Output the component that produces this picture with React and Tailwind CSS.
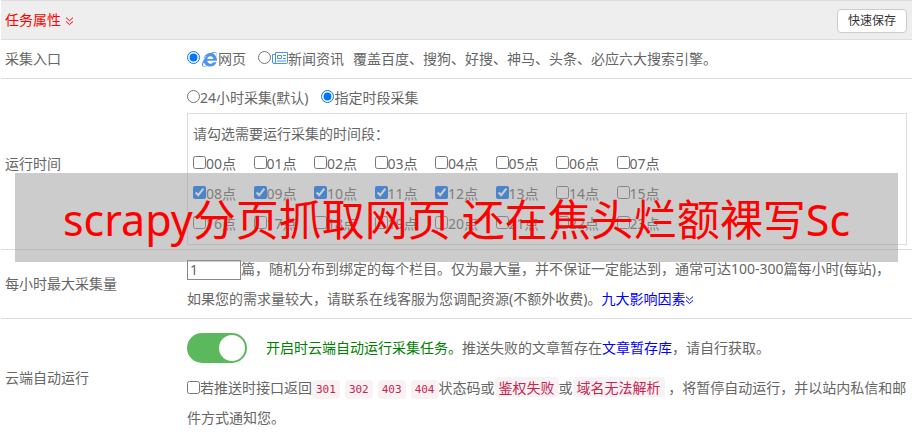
import { useState } from "react";
import { FaInternetExplorer } from "react-icons/fa";

const HOURS = Array.from({ length: 24 }, (_, i) => String(i).padStart(2, "0"));
const STATUS_CODES = ["301", "302", "403", "404"];

function DoubleAngle({ className = "" }) {
  return (
    <svg
      viewBox="0 0 9 9"
      className={`inline-block size-[9px] ${className}`}
      fill="none"
      stroke="currentColor"
      strokeWidth="1"
      aria-hidden="true"
    >
      <path d="M1 0.6 4.5 3.8 8 0.6M1 4.4 4.5 7.6 8 4.4" />
    </svg>
  );
}

function NewsIcon() {
  return (
    <svg
      viewBox="0 0 16 12"
      className="mb-0.5 h-3 w-4 text-[#4d94ee]"
      fill="none"
      stroke="currentColor"
      aria-hidden="true"
    >
      <path d="M3.5 0.5H15.5V10.5Q15.5 11.5 14.5 11.5H2Q0.5 11.5 0.5 10V2.5H3M3.5 0.5V10Q3.5 11.5 2 11.5" />
      <path d="M5.5 3.5H9.5V6.5H5.5ZM11 3.5H14M11 6.5H14M5 9H14" />
    </svg>
  );
}

function Choice({ children, className = "", ...props }) {
  return (
    <label className={`inline-flex items-center ${className}`}>
      <input className="mb-[3px] size-[13px] shrink-0" {...props} />
      {children}
    </label>
  );
}

function Row({ label, children }) {
  return (
    <div className="flex items-center border-b border-[#ddd] py-1 pl-1 pr-[5px]">
      <div className="w-[182px] shrink-0">{label}</div>
      <div className="min-w-0 flex-1">{children}</div>
    </div>
  );
}

function CodeText({ children }) {
  return (
    <code className="rounded bg-[#f9f2f4] px-1 font-['Noto_Sans_CJK_SC',sans-serif] text-sm text-[#c7254e]">
      {children}
    </code>
  );
}

export default function App() {
  const [entry, setEntry] = useState("web");
  const [mode, setMode] = useState("range");
  const [hours, setHours] = useState(["08", "09", "10", "11", "12", "13"]);
  const [limit, setLimit] = useState("1");
  const [autoRun, setAutoRun] = useState(true);
  const [pauseOnError, setPauseOnError] = useState(false);

  function toggleHour(h) {
    setHours((prev) => (prev.includes(h) ? prev.filter((x) => x !== h) : [...prev, h]));
  }

  return (
    <main className="relative overflow-hidden bg-white pl-px font-['Noto_Sans','Noto_Sans_CJK_SC',sans-serif] text-sm/[30px] text-[#666]">
      <header className="flex h-10 items-center justify-between border-y border-[#ddd] bg-[#eee] pl-1 pr-[5px]">
        <h1 className="text-[#f00]">
          任务属性 <DoubleAngle />
        </h1>
        <button
          type="button"
          className="mt-0.5 h-6 rounded border border-[#ccc] bg-white px-[10px] text-xs text-[#333]"
        >
          快速保存
        </button>
      </header>

      <Row label="采集入口">
        <div className="flex items-center">
          <Choice
            type="radio"
            name="entry"
            checked={entry === "web"}
            onChange={() => setEntry("web")}
          >
            <FaInternetExplorer className="ml-0.5 mr-px size-[15px] text-[#4d94ee]" />
            网页
          </Choice>
          <Choice
            className="ml-3"
            type="radio"
            name="entry"
            checked={entry === "news"}
            onChange={() => setEntry("news")}
          >
            <span className="ml-px">
              <NewsIcon />
            </span>
            新闻资讯
          </Choice>
          <span className="ml-[9px]">覆盖百度、搜狗、好搜、神马、头条、必应六大搜索引擎。</span>
        </div>
      </Row>

      <Row label="运行时间">
        <div className="flex items-center gap-[13px]">
          <Choice
            type="radio"
            name="mode"
            checked={mode === "all"}
            onChange={() => setMode("all")}
          >
            24小时采集(默认)
          </Choice>
          <Choice
            type="radio"
            name="mode"
            checked={mode === "range"}
            onChange={() => setMode("range")}
          >
            指定时段采集
          </Choice>
        </div>
        <fieldset className="border border-[#ddd] p-[5px]">
          <p>请勾选需要运行采集的时间段：</p>
          <div className="grid max-w-[484px] grid-cols-8">
            {HOURS.map((h) => (
              <Choice
                key={h}
                type="checkbox"
                checked={hours.includes(h)}
                onChange={() => toggleHour(h)}
              >
                {h}点
              </Choice>
            ))}
          </div>
        </fieldset>
      </Row>

      <Row label={<label htmlFor="limit">每小时最大采集量</label>}>
        <div>
          <input
            id="limit"
            type="text"
            value={limit}
            onChange={(e) => setLimit(e.target.value)}
            className="h-5 w-[54px] border border-[#888] px-0.5 align-middle text-sm"
          />
          篇，随机分布到绑定的每个栏目。仅为最大量，并不保证一定能达到，通常可达100-300篇每小时(每站)，
          <br />
          如果您的需求量较大，请联系在线客服为您调配资源(不额外收费)。
          <a href="#factors" className="text-[#00f]">
            九大影响因素
            <DoubleAngle />
          </a>
        </div>
      </Row>

      <Row label="云端自动运行">
        <div className="flex h-[50px] items-center">
          <input
            id="auto-run"
            type="checkbox"
            role="switch"
            checked={autoRun}
            onChange={(e) => setAutoRun(e.target.checked)}
            className="h-[30px] w-[60px] shrink-0 appearance-none rounded-full bg-[#ccc] p-0.5 before:block before:size-[26px] before:rounded-full before:bg-white checked:bg-[#5cb85c] checked:before:ml-[30px]"
          />
          <p className="ml-[19px]">
            <label htmlFor="auto-run" className="text-[#008000]">
              开启时云端自动运行采集任务。
            </label>
            推送失败的文章暂存在
            <a href="#drafts" className="text-[#00f]">
              文章暂存库
            </a>
            ，请自行获取。
          </p>
        </div>
        <label className="block">
          <input
            type="checkbox"
            checked={pauseOnError}
            onChange={(e) => setPauseOnError(e.target.checked)}
            className="size-[13px] align-[-1px]"
          />
          若推送时接口返回
          <span className="inline-flex items-center gap-[5px] align-middle">
            {STATUS_CODES.map((code) => (
              <code
                key={code}
                className="rounded bg-[#f9f2f4] px-1 font-['DejaVu_Sans_Mono',monospace] text-[11px]/[19px] text-[#c7254e]"
              >
                {code}
              </code>
            ))}
          </span>
          状态码或<CodeText>鉴权失败</CodeText>或<CodeText>域名无法解析</CodeText>{" "}
          ，将暂停自动运行，并以站内私信和邮件方式通知您。
        </label>
      </Row>

      <div className="absolute left-[15px] right-[14px] top-[173px] flex h-[89px] items-center justify-center whitespace-nowrap bg-[rgba(150,150,150,0.49)] pt-1 text-[43px] text-[#f00]">
        scrapy分页抓取网页 还在焦头烂额裸写Sc
      </div>
    </main>
  );
}
